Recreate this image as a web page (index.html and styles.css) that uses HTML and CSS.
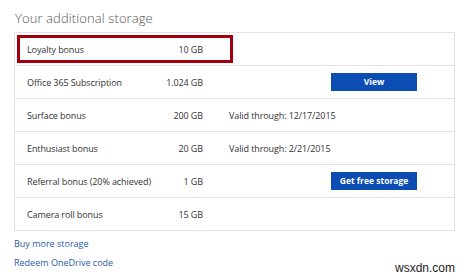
FILE: index.html
```html
<!DOCTYPE html>
<html lang="en">
<head>
  <meta charset="UTF-8" />
  <title>Your additional storage</title>
  <link rel="stylesheet" href="styles.css">
</head>
<body>

  <div class="page">
    <h1>Your additional storage</h1>

    <div class="storage">
      <div class="row">
        <span class="name">Loyalty bonus</span>
        <span class="size">10 GB</span>
        <span class="valid"></span>
        <span></span>
        <div class="highlight"></div>
      </div>
      <div class="row">
        <span class="name">Office 365 Subscription</span>
        <span class="size">1.024 GB</span>
        <span class="valid"></span>
        <a class="btn" href="#">View</a>
      </div>
      <div class="row">
        <span class="name">Surface bonus</span>
        <span class="size">200 GB</span>
        <span class="valid">Valid through: 12/17/2015</span>
        <span></span>
      </div>
      <div class="row">
        <span class="name">Enthusiast bonus</span>
        <span class="size">20 GB</span>
        <span class="valid">Valid through: 2/21/2015</span>
        <span></span>
      </div>
      <div class="row">
        <span class="name">Referral bonus (20% achieved)</span>
        <span class="size">1 GB</span>
        <span class="valid"></span>
        <a class="btn" href="#">Get free storage</a>
      </div>
      <div class="row">
        <span class="name">Camera roll bonus</span>
        <span class="size">15 GB</span>
        <span class="valid"></span>
        <span></span>
      </div>
    </div>

    <div class="links">
      <a href="#">Buy more storage</a>
      <a href="#">Redeem OneDrive code</a>
    </div>

    <div class="watermark">wsxdn.com</div>
  </div>

</body>
</html>
```

FILE: styles.css
```css
* {
  margin: 0;
  padding: 0;
  box-sizing: border-box;
}

body {
  font-family: 'Open Sans', sans-serif;
  background: #fff;
  color: #333;
  width: 468px;
  height: 280px;
  overflow: hidden;
}

.page {
  padding: 9px 13px 0 14px;
  position: relative;
  height: 280px;
}

h1 {
  font-size: 13px;
  font-weight: 300;
  color: #555;
  height: 23px;
  line-height: 18px;
  padding-left: 1px;
  letter-spacing: 0.1px;
}

.storage {
  border: 1px solid #e2e2e2;
  width: 441px;
}

.row {
  position: relative;
  display: grid;
  grid-template-columns: 100px 76px 128px 86px;
  align-items: center;
  height: 33px;
  padding: 0 11px 0 12px;
  border-bottom: 1px solid #e2e2e2;
  font-size: 9px;
  letter-spacing: -0.1px;
}

.row:last-child {
  border-bottom: none;
  height: 32px;
}

.name {
  white-space: nowrap;
}

.size {
  text-align: right;
  white-space: nowrap;
}

.valid {
  padding-left: 26px;
  white-space: nowrap;
}

.btn {
  display: block;
  height: 18px;
  line-height: 18px;
  background: #0b4db3;
  color: #fff;
  text-align: center;
  text-decoration: none;
  font-weight: bold;
  font-size: 8.5px;
  letter-spacing: 0;
}

.highlight {
  position: absolute;
  left: 2px;
  top: 2px;
  width: 216px;
  height: 28px;
  border: 3px solid #a3000f;
}

.links {
  display: flex;
  flex-direction: column;
  gap: 6px;
  padding-top: 6px;
}

.links a {
  color: #2a5ba8;
  text-decoration: none;
  font-size: 9px;
  line-height: 13px;
}

.watermark {
  position: absolute;
  right: 13px;
  top: 261px;
  font-family: 'Liberation Sans', Arial, sans-serif;
  font-size: 12px;
  color: #222;
}
```
